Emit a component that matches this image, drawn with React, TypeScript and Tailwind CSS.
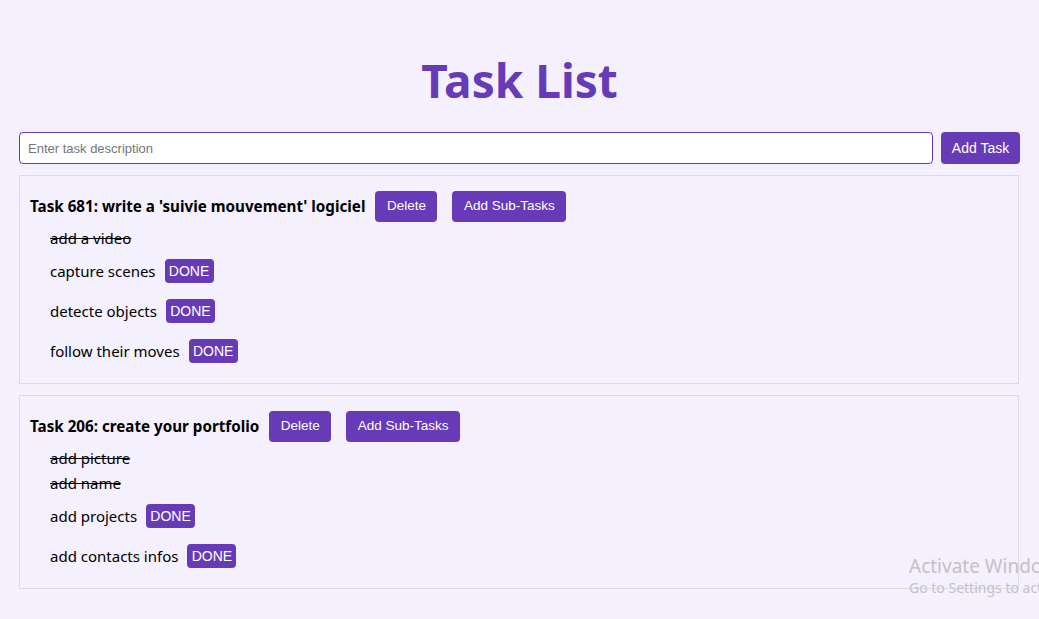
import { useState } from "react";

type SubTask = { text: string; done: boolean };
type Task = { id: number; title: string; subs: SubTask[] };

const initialTasks: Task[] = [
  {
    id: 681,
    title: "write a 'suivie mouvement' logiciel",
    subs: [
      { text: "add a video", done: true },
      { text: "capture scenes", done: false },
      { text: "detecte objects", done: false },
      { text: "follow their moves", done: false },
    ],
  },
  {
    id: 206,
    title: "create your portfolio",
    subs: [
      { text: "add picture", done: true },
      { text: "add name", done: true },
      { text: "add projects", done: false },
      { text: "add contacts infos", done: false },
    ],
  },
];

const btn =
  "bg-[#673ab7] text-white rounded-[4px] font-['Liberation_Sans',Arial,sans-serif]";

const App = () => {
  const [tasks, setTasks] = useState<Task[]>(initialTasks);
  const [input, setInput] = useState("");

  const markDone = (taskId: number, idx: number) => {
    setTasks(
      tasks.map((t) =>
        t.id === taskId
          ? { ...t, subs: t.subs.map((s, i) => (i === idx ? { ...s, done: true } : s)) }
          : t
      )
    );
  };

  return (
    <div className="min-h-[619px] bg-[#f4f0fd] px-[19px] font-['Noto_Sans','Open_Sans',sans-serif] text-black">
      <h1 className="pt-[51px] h-[109px] leading-[58px] text-center text-[46px] font-bold text-[#673ab7] mb-[23px]">
        Task List
      </h1>

      {/* New task */}
      <div className="flex gap-2 items-center">
        <input
          value={input}
          onChange={(e) => setInput(e.target.value)}
          placeholder="Enter task description"
          className="flex-1 h-[32px] bg-white border border-[#673ab7] rounded-[4px] px-2 text-[13px] font-['Liberation_Sans',Arial,sans-serif] placeholder:text-[#757575] outline-none"
        />
        <button className={`${btn} text-[14px] h-[32px] w-[79px]`}>Add Task</button>
      </div>

      {/* Task cards */}
      <div className="mt-[11px] flex flex-col gap-[11px]">
        {tasks.map((task) => (
          <div key={task.id} className="border border-[#dcdcdc] pt-[10px] pb-[12px] pl-[10px] w-[1000px]">
            <div className="h-[40px] flex items-center">
              <span className="text-[15.2px] font-bold whitespace-nowrap">
                Task {task.id}: {task.title}
              </span>
              <button className={`${btn} text-[13.5px] ml-[10px] h-[31px] w-[62px]`}>Delete</button>
              <button className={`${btn} text-[13.5px] ml-[15px] h-[31px] w-[114px]`}>Add Sub-Tasks</button>
            </div>
            <ul className="pl-[20px] text-[15px]">
              {task.subs.map((s, i) =>
                s.done ? (
                  <li key={i} className="h-[25px] flex items-center line-through">
                    {s.text}
                  </li>
                ) : (
                  <li key={i} className="h-[40px] flex items-center">
                    <span>{s.text}</span>
                    <button
                      onClick={() => markDone(task.id, i)}
                      className={`${btn} text-[14px] ml-[9px] h-[24px] w-[49px] rounded-[3px]`}
                    >
                      DONE
                    </button>
                  </li>
                )
              )}
            </ul>
          </div>
        ))}
      </div>

      {/* Windows watermark */}
      <div className="absolute left-[909px] top-[553px] w-[130px] overflow-hidden whitespace-nowrap text-[#c4c0cc] font-['Noto_Sans',sans-serif] pointer-events-none">
        <div className="text-[19px] leading-[26px]">Activate Windows</div>
        <div className="text-[14px] leading-[18px]">Go to Settings to activate Windows.</div>
      </div>
    </div>
  );
};

export default App;
